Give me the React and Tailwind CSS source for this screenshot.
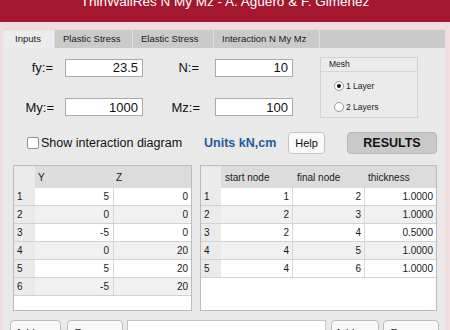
import React from 'react';

const nodes = [
  [1, 5, 0],
  [2, 0, 0],
  [3, -5, 0],
  [4, 0, 20],
  [5, 5, 20],
  [6, -5, 20],
];

const elements = [
  [1, 1, 2, '1.0000'],
  [2, 2, 3, '1.0000'],
  [3, 2, 4, '0.5000'],
  [4, 4, 5, '1.0000'],
  [5, 4, 6, '1.0000'],
];

const tabs = [
  { label: 'Inputs', w: 'w-[52px] pl-[12px]', active: true },
  { label: 'Plastic Stress', w: 'w-[78px] pl-[8px]' },
  { label: 'Elastic Stress', w: 'w-[81px] pl-[8px]' },
  { label: 'Interaction N My Mz', w: 'w-[106px] pl-[8px]' },
];

function Field({ value, className }) {
  return (
    <div className={`h-[18px] w-[78px] bg-white border border-[#a9a9a9] flex items-center justify-end pr-[4px] text-[13px] text-[#111] ${className || ''}`}>
      {value}
    </div>
  );
}

function Radio({ checked, label }) {
  return (
    <div className="flex items-center gap-[2px] text-[8.5px] text-[#222]">
      <span className="w-[10px] h-[10px] rounded-full bg-white border border-[#9a9a9a] flex items-center justify-center">
        {checked && <span className="w-[4px] h-[4px] rounded-full bg-[#111]" />}
      </span>
      {label}
    </div>
  );
}

function BottomButton({ label, className }) {
  return (
    <div className={`h-[22px] bg-[#f8f8f8] border border-[#bdbdbd] rounded-[4px] flex justify-center pt-[4px] text-[11px] text-[#222] ${className}`}>
      {label}
    </div>
  );
}

export default function App() {
  return (
    <div className="w-[450px] h-[330px] overflow-hidden bg-[#f1dde1] font-['Liberation_Sans',Arial,sans-serif]">
      <div className="h-[22px] bg-[#a3172f] overflow-hidden flex justify-center">
        <div className="text-white text-[13.5px] leading-none mt-[-5px] whitespace-nowrap">
          ThinWallRes N My Mz - A. Agüero &amp; F. Giménez
        </div>
      </div>

      <div className="ml-[3px] mt-[7px] w-[442px] h-[310px] bg-[#e9e9e9] border-t border-[#dcdcdc]">
        {/* tabs */}
        <div className="h-[18px] bg-[#cacaca] flex text-[9.5px] text-[#1a1a1a]">
          {tabs.map((t) => (
            <div
              key={t.label}
              className={`${t.w} h-full flex items-center border-r border-[#dedede] ${t.active ? 'bg-[#ececec]' : ''}`}
            >
              {t.label}
            </div>
          ))}
        </div>

        {/* inputs */}
        <div className="flex pt-[9px]">
          <div className="flex flex-col gap-[20px] mt-[1px] text-[13px] text-[#111]">
            <div className="flex items-center">
              <span className="w-[50px] text-right">fy:=</span>
              <Field value="23.5" className="ml-[12px]" />
              <span className="w-[56px] text-right">N:=</span>
              <Field value="10" className="ml-[16px]" />
            </div>
            <div className="flex items-center">
              <span className="w-[51px] text-right">My:=</span>
              <Field value="1000" className="ml-[11px]" />
              <span className="w-[57px] text-right">Mz:=</span>
              <Field value="100" className="ml-[15px]" />
            </div>
          </div>
          <div className="ml-[27px] w-[98px] h-[61px] border border-[#d2d2d2] bg-[#ebebeb]">
            <div className="h-[14px] border-b border-[#d6d6d6] pl-[8px] text-[8.5px] text-[#222] flex items-center">
              Mesh
            </div>
            <div className="flex flex-col gap-[8px] pl-[13px] pt-[8px]">
              <Radio checked label="1 Layer" />
              <Radio label="2 Layers" />
            </div>
          </div>
        </div>

        {/* action row */}
        <div className="flex items-center h-[24px] mt-[13px]">
          <div className="ml-[24px] w-[177px] flex items-center gap-[2px] text-[12.5px] text-[#111]">
            <span className="w-[12px] h-[12px] bg-white border border-[#8e8e8e] rounded-[2px]" />
            Show interaction diagram
          </div>
          <span className="w-[84px] text-[12.5px] font-bold text-[#1c5d9c]">Units kN,cm</span>
          <div className="w-[37px] h-[22px] bg-[#fafafa] border border-[#c4c4c4] rounded-[4px] flex items-center justify-center text-[11px] text-[#111]">
            Help
          </div>
          <div className="ml-[22px] w-[90px] h-[22px] bg-[#c9c9c9] border border-[#b8b8b8] rounded-[4px] flex items-center justify-center text-[12.5px] font-bold text-[#111]">
            RESULTS
          </div>
        </div>

        {/* tables */}
        <div className="flex gap-[8px] ml-[10px] mt-[10px] text-[10px] text-[#1a1a1a]">
          <div className="w-[179px] h-[146px] bg-white border border-[#bcbcbc]">
            <div className="flex h-[22px] bg-[#dcdcdc]">
              <div className="w-[21px] bg-[#ebebeb]" />
              <div className="w-[79px] pl-[3px] pt-[4px]">Y</div>
              <div className="flex-1 pl-[2px] pt-[4px]">Z</div>
            </div>
            {nodes.map((r, i) => (
              <div key={r[0]} className={`flex h-[18px] border-b border-[#d2d2d2] ${i % 2 ? 'bg-[#f1f1f1]' : 'bg-white'}`}>
                <div className="w-[21px] bg-[#ebebeb] pl-[3px] flex items-center">{r[0]}</div>
                <div className="w-[79px] border-r border-[#d8d8d8] flex items-center justify-end pr-[4px]">{r[1]}</div>
                <div className="flex-1 flex items-center justify-end pr-[3px]">{r[2]}</div>
              </div>
            ))}
          </div>

          <div className="w-[237px] h-[146px] bg-white border border-[#bcbcbc]">
            <div className="flex h-[22px] bg-[#dcdcdc]">
              <div className="w-[20px] bg-[#ebebeb]" />
              <div className="w-[72px] pl-[4px] pt-[4px]">start node</div>
              <div className="w-[72px] pl-[4px] pt-[4px]">final node</div>
              <div className="flex-1 pl-[3px] pt-[4px]">thickness</div>
            </div>
            {elements.map((r, i) => (
              <div key={r[0]} className={`flex h-[18px] border-b border-[#d2d2d2] ${i % 2 ? 'bg-[#f1f1f1]' : 'bg-white'}`}>
                <div className="w-[20px] bg-[#ebebeb] pl-[3px] flex items-center">{r[0]}</div>
                <div className="w-[72px] border-r border-[#d8d8d8] flex items-center justify-end pr-[3px]">{r[1]}</div>
                <div className="w-[72px] border-r border-[#d8d8d8] flex items-center justify-end pr-[3px]">{r[2]}</div>
                <div className="flex-1 flex items-center justify-end pr-[3px]">{r[3]}</div>
              </div>
            ))}
          </div>
        </div>

        {/* bottom buttons */}
        <div className="flex mt-[9px] ml-[7px]">
          <BottomButton label="Add row" className="w-[51px]" />
          <BottomButton label="Remove" className="w-[56px] ml-[6px]" />
          <div className="w-[199px] h-[22px] ml-[4px] bg-white border border-[#c4c4c4]" />
          <BottomButton label="Add row" className="w-[48px] ml-[5px]" />
          <BottomButton label="Remove" className="w-[56px] ml-[4px]" />
        </div>
      </div>
    </div>
  );
}
